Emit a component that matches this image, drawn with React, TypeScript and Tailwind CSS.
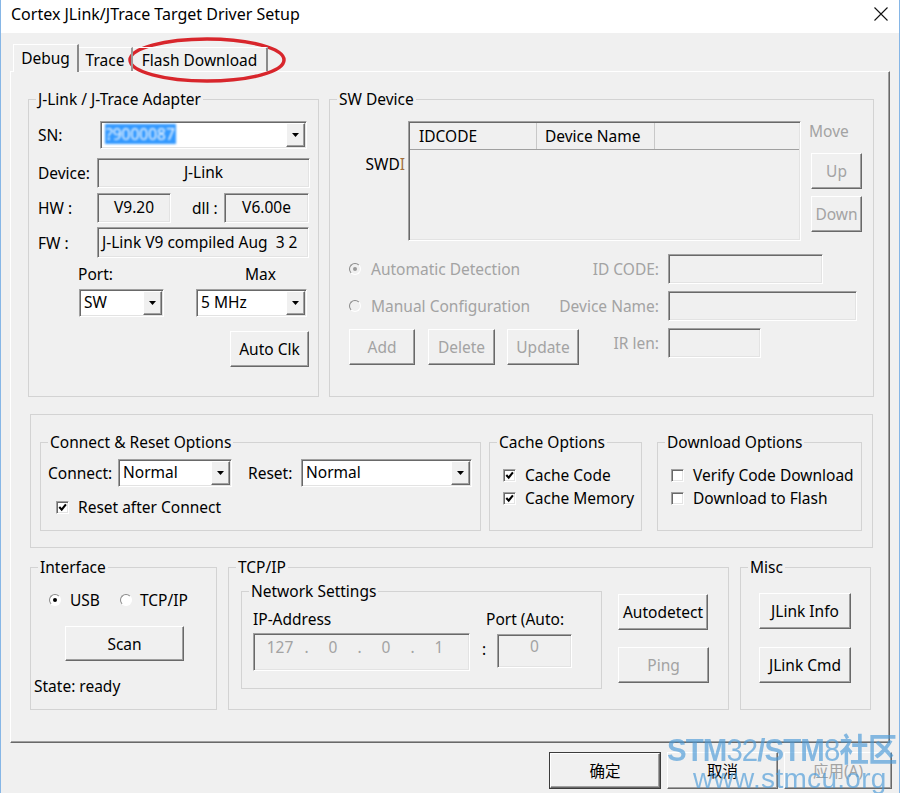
import React from "react";

// classic win32 3d edges
const raised =
  "border border-t-white border-l-white border-b-[#696969] border-r-[#696969] shadow-[inset_-1px_-1px_0_#a0a0a0]";
const sunken =
  "border border-t-[#a0a0a0] border-l-[#a0a0a0] border-b-white border-r-white shadow-[inset_1px_1px_0_#696969,inset_-1px_-1px_0_#e3e3e3]";

type Kids = { children?: React.ReactNode; className?: string };

function Group({ label, className = "", children }: Kids & { label: string }) {
  return (
    <fieldset className={`min-w-0 border border-[#d3d3d3] ${className}`}>
      <legend className="ml-[7px] px-[2px] leading-[20px]">{label}</legend>
      {children}
    </fieldset>
  );
}

function Btn({ children, className = "", disabled = false }: Kids & { disabled?: boolean }) {
  return (
    <button
      type="button"
      className={`flex shrink-0 items-center justify-center bg-[#f0f0f0] ${raised} ${
        disabled ? "text-[#a3a3a3]" : "text-black"
      } ${className}`}
    >
      {children}
    </button>
  );
}

function Arrow() {
  return (
    <svg width="7" height="4" viewBox="0 0 7 4">
      <path d="M0 0h7L3.5 4z" fill="#000" />
    </svg>
  );
}

function Combo({ children, className = "" }: Kids) {
  return (
    <div className={`flex shrink-0 bg-white ${sunken} ${className}`}>
      <div className="flex flex-1 items-center overflow-hidden whitespace-nowrap pl-[4px] pb-[2px]">{children}</div>
      <div className={`m-[1px] flex w-[19px] items-center justify-center bg-[#f0f0f0] ${raised}`}>
        <Arrow />
      </div>
    </div>
  );
}

function Field({ children, className = "" }: Kids) {
  return (
    <div className={`flex shrink-0 items-center overflow-hidden whitespace-nowrap bg-[#f0f0f0] pb-[2px] ${sunken} ${className}`}>
      {children}
    </div>
  );
}

function Check({ checked = false }: { checked?: boolean }) {
  return (
    <span className={`flex h-[13px] w-[13px] shrink-0 items-center justify-center bg-white ${sunken}`}>
      {checked && (
        <svg width="9" height="9" viewBox="0 0 9 9">
          <path d="M1.3 4l2.4 2.6L7.9 1.4" stroke="#000" strokeWidth="2.1" fill="none" />
        </svg>
      )}
    </span>
  );
}

function Radio({ checked = false, disabled = false }: { checked?: boolean; disabled?: boolean }) {
  return (
    <span
      className={`flex h-[12px] w-[12px] shrink-0 items-center justify-center rounded-full ${
        disabled ? "bg-[#f0f0f0]" : "bg-white"
      } border border-t-[#8a8a8a] border-l-[#8a8a8a] border-b-white border-r-white`}
    >
      {checked && (
        <span className={`h-[4px] w-[4px] rounded-full ${disabled ? "bg-[#9a9a9a]" : "bg-black"}`} />
      )}
    </span>
  );
}

function AdapterGroup() {
  return (
    <Group label="J-Link / J-Trace Adapter" className="h-[308px] w-[291px]">
      <div className="pl-[9px]">
        <div className="mt-[12px] flex h-[28px] items-center">
          <span className="w-[62px]">SN:</span>
          <Combo className="h-[28px] w-[207px]">
            <span className="bg-[#3399ff] px-[1px] text-white blur-[1.2px]">?9000087</span>
          </Combo>
        </div>
        <div className="mt-[9px] flex h-[30px] items-center">
          <span className="w-[59px]">Device:</span>
          <Field className="h-[30px] w-[213px] justify-center">J-Link</Field>
        </div>
        <div className="mt-[5px] flex h-[30px] items-center">
          <span className="w-[59px]">HW :</span>
          <Field className="h-[30px] w-[74px] justify-center">V9.20</Field>
          <span className="ml-[21px] w-[32px]">dll :</span>
          <Field className="h-[30px] w-[85px] justify-center">V6.00e</Field>
        </div>
        <div className="mt-[4px] flex h-[31px] items-center">
          <span className="w-[59px]">FW :</span>
          <Field className="h-[31px] w-[212px] pl-[4px]">J-Link V9 compiled Aug&nbsp; 3 2</Field>
        </div>
        <div className="mt-[7px] flex h-[18px] items-center">
          <span className="ml-[40px] w-[118px]">Port:</span>
          <span className="pl-[49px]">Max</span>
        </div>
        <div className="mt-[6px] flex h-[28px]">
          <Combo className="ml-[41px] h-[28px] w-[85px]">SW</Combo>
          <Combo className="ml-[32px] h-[28px] w-[111px]">5 MHz</Combo>
        </div>
        <div className="mt-[14px] flex">
          <Btn className="ml-[192px] h-[36px] w-[79px]">Auto Clk</Btn>
        </div>
      </div>
    </Group>
  );
}

function SwDeviceGroup() {
  return (
    <Group label="SW Device" className="h-[308px] w-[545px]">
      <div className="mt-[12px] flex items-start">
        <div className="w-[78px] pr-[3px] pt-[33px] text-right leading-[20px]">
          SWD<span className="text-[#a0703f]">I</span>
        </div>
        <div className={`h-[120px] w-[393px] bg-[#f0f0f0] p-[1px] ${sunken}`}>
          <div className="flex h-[27px] border-b border-[#a0a0a0]">
            <div className="flex w-[127px] items-center border-r border-[#c8c8c8] pl-[9px]">IDCODE</div>
            <div className="flex w-[118px] items-center border-r border-[#c8c8c8] pl-[8px]">Device Name</div>
            <div className="flex-1" />
          </div>
        </div>
        <div className="ml-[8px] flex flex-col">
          <span className="h-[20px] leading-[20px] text-[#a3a3a3]">Move</span>
          <Btn disabled className="ml-[2px] mt-[12px] h-[36px] w-[51px]">Up</Btn>
          <Btn disabled className="ml-[2px] mt-[7px] h-[36px] w-[51px]">Down</Btn>
        </div>
      </div>
      <div className="text-[#a3a3a3]">
        <div className="mt-[13px] flex h-[30px] items-center">
          <div className="flex w-[210px] items-center pl-[19px]">
            <Radio checked disabled />
            <span className="ml-[10px] whitespace-nowrap">Automatic Detection</span>
          </div>
          <span className="w-[119px] text-right">ID CODE:</span>
          <Field className="ml-[9px] h-[30px] w-[155px]" />
        </div>
        <div className="mt-[7px] flex h-[30px] items-center">
          <div className="flex w-[210px] items-center pl-[19px]">
            <Radio disabled />
            <span className="ml-[10px] whitespace-nowrap">Manual Configuration</span>
          </div>
          <span className="w-[119px] whitespace-nowrap text-right">Device Name:</span>
          <Field className="ml-[9px] h-[30px] w-[189px]" />
        </div>
        <div className="mt-[7px] flex items-start pl-[19px]">
          <Btn disabled className="mt-[1px] h-[36px] w-[66px]">Add</Btn>
          <Btn disabled className="ml-[13px] mt-[1px] h-[36px] w-[67px]">Delete</Btn>
          <Btn disabled className="ml-[12px] mt-[1px] h-[36px] w-[72px]">Update</Btn>
          <span className="w-[80px] text-right leading-[30px]">IR len:</span>
          <Field className="ml-[9px] h-[30px] w-[93px]" />
        </div>
      </div>
    </Group>
  );
}

function OptionsBox() {
  return (
    <div className="ml-[19px] mt-[17px] flex h-[134px] w-[843px] items-start border border-[#d3d3d3] pl-[9px] pt-[17px]">
      <Group label="Connect & Reset Options" className="h-[99px] w-[441px]">
        <div className="mt-[7px] flex h-[28px] items-center pl-[7px]">
          <span className="w-[70px]">Connect:</span>
          <Combo className="h-[28px] w-[114px]">Normal</Combo>
          <span className="ml-[16px] w-[53px]">Reset:</span>
          <Combo className="h-[28px] w-[171px]">Normal</Combo>
        </div>
        <div className="mt-[10px] flex h-[20px] items-center pl-[15px]">
          <Check checked />
          <span className="ml-[9px]">Reset after Connect</span>
        </div>
      </Group>
      <Group label="Cache Options" className="ml-[8px] h-[99px] w-[153px]">
        <div className="mt-[13px] flex h-[20px] items-center pl-[13px]">
          <Check checked />
          <span className="ml-[9px]">Cache Code</span>
        </div>
        <div className="mt-[3px] flex h-[20px] items-center pl-[13px]">
          <Check checked />
          <span className="ml-[9px] whitespace-nowrap">Cache Memory</span>
        </div>
      </Group>
      <Group label="Download Options" className="ml-[15px] h-[99px] w-[205px] overflow-hidden">
        <div className="mt-[13px] flex h-[20px] items-center pl-[13px]">
          <Check />
          <span className="ml-[9px] whitespace-nowrap">Verify Code Download</span>
        </div>
        <div className="mt-[3px] flex h-[20px] items-center pl-[13px]">
          <Check />
          <span className="ml-[9px]">Download to Flash</span>
        </div>
      </Group>
    </div>
  );
}

function BottomRow() {
  const ip = ["127", "0", "0", "1"];
  return (
    <div className="ml-[19px] mt-[9px] flex items-start">
      <Group label="Interface" className="h-[153px] w-[187px]">
        <div className="mt-[13px] flex h-[20px] items-center pl-[18px]">
          <Radio checked />
          <span className="ml-[9px] w-[50px]">USB</span>
          <Radio />
          <span className="ml-[8px]">TCP/IP</span>
        </div>
        <Btn className="ml-[34px] mt-[16px] h-[35px] w-[119px]">Scan</Btn>
        <div className="mt-[15px] h-[20px] pl-[3px] leading-[20px]">State: ready</div>
      </Group>

      <Group label="TCP/IP" className="ml-[11px] h-[153px] w-[501px]">
        <div className="flex items-start">
          <Group label="Network Settings" className="ml-[12px] mt-[4px] h-[108px] w-[361px]">
            <div className="mt-[8px] flex h-[20px] items-center leading-[20px]">
              <span className="ml-[11px] w-[78px] overflow-hidden whitespace-nowrap">IP-Address</span>
              <span className="ml-[155px] whitespace-nowrap">Port (Auto:</span>
            </div>
            <div className="mt-[4px] flex items-start">
              <div className={`ml-[11px] flex h-[38px] w-[217px] items-start bg-[#f0f0f0] pl-[10px] pt-[3px] text-[#a3a3a3] ${sunken}`}>
                {ip.map((o, i) => (
                  <React.Fragment key={i}>
                    <span className="w-[32px] text-center">{o}</span>
                    {i < 3 && <span className="w-[21px] text-center">.</span>}
                  </React.Fragment>
                ))}
              </div>
              <span className="ml-[12px] mt-[6px] w-[15px] leading-[20px]">:</span>
              <div className={`mt-[1px] flex h-[34px] w-[75px] justify-center bg-[#f0f0f0] pt-[1px] text-[#a3a3a3] ${sunken}`}>
                0
              </div>
            </div>
          </Group>
          <div className="ml-[16px] mt-[17px] flex flex-col">
            <Btn className="h-[36px] w-[90px]">Autodetect</Btn>
            <Btn disabled className="mt-[17px] h-[36px] w-[91px]">Ping</Btn>
          </div>
        </div>
      </Group>

      <Group label="Misc" className="ml-[11px] h-[153px] w-[131px]">
        <Btn className="ml-[18px] mt-[16px] h-[36px] w-[92px]">JLink Info</Btn>
        <Btn className="ml-[18px] mt-[18px] h-[36px] w-[92px]">JLink Cmd</Btn>
      </Group>
    </div>
  );
}

export default function App() {
  return (
    <div className="relative h-[793px] w-[900px] overflow-hidden border-x border-[#86b6e6] bg-[#f0f0f0] font-['Noto_Sans','Noto_Sans_CJK_SC',sans-serif] text-[15.5px] leading-[20px] text-black">
      {/* title bar */}
      <div className="flex h-[33px] items-center justify-between bg-white pb-[5px] pl-[10px] pr-[11px]">
        <span className="text-[16px]">Cortex JLink/JTrace Target Driver Setup</span>
        <svg width="14" height="14" viewBox="0 0 14 14">
          <path d="M0.5 0.5l13 13M13.5 0.5l-13 13" stroke="#111" strokeWidth="1.1" />
        </svg>
      </div>

      {/* tabs */}
      <div className="relative z-10 ml-[12px] mt-[11px] flex h-[28px] items-end">
        <div className="flex h-[28px] w-[66px] items-center justify-center border-l border-t border-white border-r-2 border-r-[#8a8a8a] bg-[#f0f0f0] pb-[2px]">
          Debug
        </div>
        <div className="mb-[1px] flex h-[24px] w-[54px] items-center justify-center border-r-2 border-t border-t-white border-r-[#9a9a9a]">
          Trace
        </div>
        <div className="mb-[1px] flex h-[24px] w-[135px] items-center justify-center border-r-2 border-t border-t-white border-r-[#8a8a8a]">
          Flash Download
        </div>
      </div>

      {/* tab page */}
      <div className="-mt-[1px] ml-[9px] h-[672px] w-[880px] border border-t-white border-l-white border-b-[#696969] border-r-[#696969] shadow-[inset_-1px_-1px_0_#a0a0a0]">
        <div className="ml-[17px] mt-[17px] flex items-start gap-[10px]">
          <AdapterGroup />
          <SwDeviceGroup />
        </div>
        <OptionsBox />
        <BottomRow />
      </div>

      {/* dialog buttons */}
      <div className="mt-[9px] flex justify-end gap-[6px] pr-[7px]">
        <button type="button" className="h-[37px] w-[112px] border border-[#3c3c3c] bg-[#f0f0f0]">
          <span className={`flex h-full w-full items-center justify-center ${raised}`}>确定</span>
        </button>
        <Btn className="h-[37px] w-[111px]">取消</Btn>
        <Btn disabled className="h-[37px] w-[108px]">应用(A)</Btn>
      </div>

      {/* red annotation ring */}
      <svg className="pointer-events-none absolute left-0 top-0" width="900" height="793">
        <ellipse cx="206" cy="60" rx="77" ry="21" fill="none" stroke="#d8262c" strokeWidth="3.5" />
      </svg>

      {/* watermark */}
      <div className="pointer-events-none absolute left-[666px] top-[730px] flex flex-col font-['Liberation_Sans',sans-serif] text-[#4a9ad8] opacity-65">
        <div className="origin-left scale-x-[0.92] whitespace-nowrap text-[32px] font-bold leading-[34px] tracking-[-1px]">
          STM<span className="font-normal">32</span>/STM<span className="font-normal">8</span>
          <span className="font-['Noto_Sans_CJK_SC',sans-serif]">社区</span>
        </div>
        <div className="-mt-[3px] ml-[26px] whitespace-nowrap text-[28px] leading-[30px] tracking-[0.3px]">
          www.stmcu.org
        </div>
      </div>
    </div>
  );
}
